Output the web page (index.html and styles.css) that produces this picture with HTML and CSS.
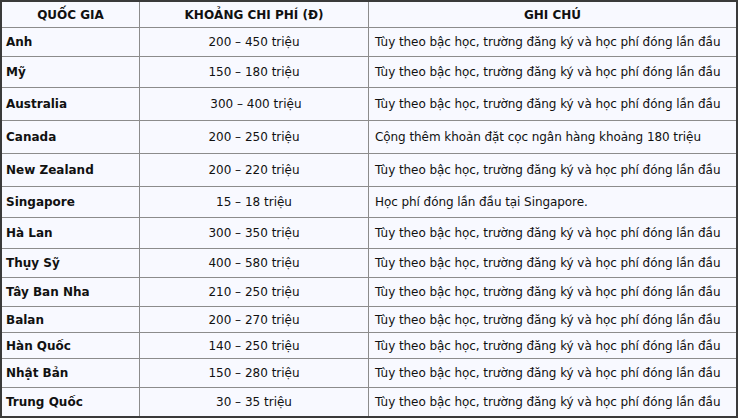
FILE: index.html
```html
<!DOCTYPE html>
<html lang="vi">
<head>
<meta charset="utf-8">
<title>Chi phí du học</title>
<link rel="stylesheet" href="styles.css">
</head>
<body>
<div class="table">
  <div class="cell head">QUỐC GIA</div>
  <div class="cell head center">KHOẢNG CHI PHÍ (Đ)</div>
  <div class="cell head center last">GHI CHÚ</div>

  <div class="cell country">Anh</div>
  <div class="cell center">200 – 450 triệu</div>
  <div class="cell note last">Tùy theo bậc học, trường đăng ký và học phí đóng lần đầu</div>

  <div class="cell country">Mỹ</div>
  <div class="cell center">150 – 180 triệu</div>
  <div class="cell note last">Tùy theo bậc học, trường đăng ký và học phí đóng lần đầu</div>

  <div class="cell country">Australia</div>
  <div class="cell center">&nbsp;300 – 400 triệu</div>
  <div class="cell note last">Tùy theo bậc học, trường đăng ký và học phí đóng lần đầu</div>

  <div class="cell country">Canada</div>
  <div class="cell center">200 – 250 triệu</div>
  <div class="cell note last">Cộng thêm khoản đặt cọc ngân hàng khoảng 180 triệu</div>

  <div class="cell country">New Zealand</div>
  <div class="cell center">200 – 220 triệu</div>
  <div class="cell note last">Tùy theo bậc học, trường đăng ký và học phí đóng lần đầu</div>

  <div class="cell country">Singapore</div>
  <div class="cell center">15 – 18 triệu</div>
  <div class="cell note last">Học phí đóng lần đầu tại Singapore.</div>

  <div class="cell country">Hà Lan</div>
  <div class="cell center">300 – 350 triệu</div>
  <div class="cell note last">Tùy theo bậc học, trường đăng ký và học phí đóng lần đầu</div>

  <div class="cell country">Thụy Sỹ</div>
  <div class="cell center">400 – 580 triệu</div>
  <div class="cell note last">Tùy theo bậc học, trường đăng ký và học phí đóng lần đầu</div>

  <div class="cell country">Tây Ban Nha</div>
  <div class="cell center">210 – 250 triệu</div>
  <div class="cell note last">Tùy theo bậc học, trường đăng ký và học phí đóng lần đầu</div>

  <div class="cell country">Balan</div>
  <div class="cell center">200 – 270 triệu</div>
  <div class="cell note last">Tùy theo bậc học, trường đăng ký và học phí đóng lần đầu</div>

  <div class="cell country">Hàn Quốc</div>
  <div class="cell center">140 – 250 triệu</div>
  <div class="cell note last">Tùy theo bậc học, trường đăng ký và học phí đóng lần đầu</div>

  <div class="cell country">Nhật Bản</div>
  <div class="cell center">150 – 280 triệu</div>
  <div class="cell note last">Tùy theo bậc học, trường đăng ký và học phí đóng lần đầu</div>

  <div class="cell country bottom">Trung Quốc</div>
  <div class="cell center bottom">30 – 35 triệu</div>
  <div class="cell note last bottom">Tùy theo bậc học, trường đăng ký và học phí đóng lần đầu</div>
</div>
</body>
</html>
```

FILE: styles.css
```css
html, body {
  margin: 0;
  padding: 0;
  background: #ffffff;
}

.table {
  box-sizing: border-box;
  width: 738px;
  height: 418px;
  border: 2px solid #3a3a3a;
  background: #f8f9ff;
  display: grid;
  grid-template-columns: 138px 229px 367px;
  grid-template-rows: 26px 29px 31px 33px 33px 33px 31px 31px 29px 29px 26px 26px 29px 28px;
  font-family: "DejaVu Sans", Verdana, sans-serif;
  font-size: 12px;
  color: #111111;
}

.cell {
  box-sizing: border-box;
  border-right: 1px solid #8c8c8c;
  border-bottom: 1px solid #8c8c8c;
  display: flex;
  align-items: center;
  white-space: nowrap;
  overflow: hidden;
}

.cell.last {
  border-right: none;
}

.cell.bottom {
  border-bottom: none;
}

.head {
  font-weight: bold;
  justify-content: center;
}

.center {
  justify-content: center;
}

.country {
  font-weight: bold;
  padding-left: 4px;
}

.note {
  padding-left: 6px;
  letter-spacing: -0.07px;
}
```
